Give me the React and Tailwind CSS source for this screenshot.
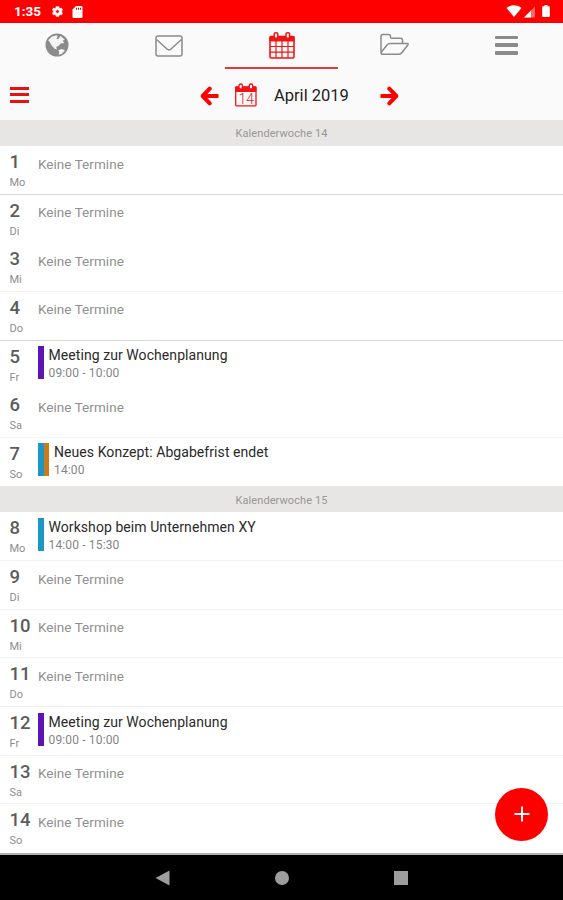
const PURPLE = "bg-[#5d14b4]";
const BLUE = "bg-[#1b96c5]";
const ORANGE = "bg-[#cb7a1c]";

const WEEKS = [
  {
    week: 14,
    days: [
      { day: 1, name: "Mo", line: "border-[#d9d9d9]" },
      { day: 2, name: "Di", line: "border-transparent" },
      { day: 3, name: "Mi", line: "border-[#f1f1f1]" },
      { day: 4, name: "Do", line: "border-[#d9d9d9]" },
      {
        day: 5,
        name: "Fr",
        line: "border-transparent",
        event: {
          title: "Meeting zur Wochenplanung",
          time: "09:00 - 10:00",
          colors: [PURPLE],
        },
      },
      { day: 6, name: "Sa", line: "border-[#f5f5f5]" },
      {
        day: 7,
        name: "So",
        line: "border-transparent",
        event: {
          title: "Neues Konzept: Abgabefrist endet",
          time: "14:00",
          colors: [BLUE, ORANGE],
        },
      },
    ],
  },
  {
    week: 15,
    days: [
      {
        day: 8,
        name: "Mo",
        line: "border-[#f1f1f1]",
        event: {
          title: "Workshop beim Unternehmen XY",
          time: "14:00 - 15:30",
          colors: [BLUE],
        },
      },
      { day: 9, name: "Di", line: "border-[#f1f1f1]" },
      { day: 10, name: "Mi", line: "border-[#f1f1f1]" },
      { day: 11, name: "Do", line: "border-[#f1f1f1]" },
      {
        day: 12,
        name: "Fr",
        line: "border-[#f1f1f1]",
        event: {
          title: "Meeting zur Wochenplanung",
          time: "09:00 - 10:00",
          colors: [PURPLE],
        },
      },
      { day: 13, name: "Sa", line: "border-[#f1f1f1]" },
      { day: 14, name: "So", line: "border-transparent" },
    ],
  },
];

function StatusBar() {
  return (
    <div className="h-[22.5px] shrink-0 bg-[#ff0000] flex items-center justify-between pl-[14px] pr-[13px] text-white">
      <div className="flex items-center">
        <span className="w-[37px] pt-[1px] text-[13.5px] leading-none font-bold">
          1:35
        </span>
        <svg width="13" height="13" viewBox="0 0 24 24" className="mt-[1px] mr-[8px]">
          <path
            fill="currentColor"
            d="M19.4 13a7.5 7.5 0 0 0 0-2l2.2-1.7-2.2-3.7-2.600 1a7.5 7.5 0 0 0-1.7-1L14.7 3h-5.400l-.4 2.6a7.5 7.5 0 0 0-1.7 1l-2.6-1-2.2 3.7L4.6 11a7.5 7.5 0 0 0 0 2l-2.2 1.7 2.2 3.7 2.6-1a7.5 7.5 0 0 0 1.7 1l.4 2.600h5.4l.4-2.6a7.5 7.5 0 0 0 1.7-1l2.6 1 2.2-3.7zM12 15.3a3.3 3.3 0 1 1 0-6.600 3.3 3.3 0 0 1 0 6.6z"
            stroke="currentColor"
            strokeWidth="1"
          />
        </svg>
        <svg width="11" height="12" viewBox="0 0 11 12" className="mt-[1px]">
          <path
            fill="currentColor"
            fillRule="evenodd"
            d="M4 0h5.5a1 1 0 0 1 1 1v10a1 1 0 0 1-1 1h-8a1 1 0 0 1-1-1V3.5zM4 1.8v2h1v-2zM6 1.8v2h1v-2zM8 1.8v2h1v-2z"
          />
        </svg>
      </div>
      <div className="flex items-center">
        <svg width="16" height="12" viewBox="0 0 16 12" className="mr-[2px]">
          <path fill="currentColor" d="M8 12 .5 3C4.5-.6 11.5-.6 15.5 3z" />
        </svg>
        <svg width="11" height="12" viewBox="0 0 11 12" className="mt-[1px] mr-[7px]">
          <path fill="currentColor" opacity="0.4" d="M0 11.5 11 .5v11z" />
          <path fill="currentColor" d="M0 11.5 7 4.5v7z" />
        </svg>
        <svg width="8" height="12" viewBox="0 0 8 12">
          <path
            fill="currentColor"
            d="M2.5 0h3v1.2H7a.8.8 0 0 1 .8.8v9.2a.8.8 0 0 1-.8.8H1a.8.8 0 0 1-.8-.8V2a.8.8 0 0 1 .8-.8h1.5z"
          />
        </svg>
      </div>
    </div>
  );
}

function GlobeIcon() {
  return (
    <svg width="24" height="24" viewBox="0 0 24 24">
      <circle cx="12" cy="12" r="11.5" fill="#8b8b8b" />
      <g fill="#f4f4f4">
        <path d="M3.2 7.2 6.500 3.8 11.500 2.3l1.300 1.700-1.600 1.500 2 .8 2.300-3.300 4.200 3.500-2 1.200 1.600 2.300-3.500.6-2.800 2.600-1.800.6.7 2.600-2.300-.7-3.300-3.800-1.800-3.200z" />
        <path d="m13.300 17.300 3.200-1.200 3.500 1.200-3 3.500-3.500.9.800-2.500z" />
      </g>
    </svg>
  );
}

function CalendarIcon() {
  return (
    <svg width="26" height="28" viewBox="0 0 26 28" fill="none" stroke="#f01414">
      <rect x="1" y="4.5" width="24" height="21.5" rx="1.2" strokeWidth="1.6" />
      <path d="M1 4.5h24V9H1z" fill="#f01414" />
      <path d="M7 9v17M13 9v17M19 9v17M1 14.5h24M1 20.2h24" strokeWidth="1.2" />
      <rect x="5.2" y=".8" width="3.600" height="5.500" rx="1.5" fill="#fafafa" strokeWidth="1.5" />
      <rect x="17" y=".8" width="3.600" height="5.500" rx="1.5" fill="#fafafa" strokeWidth="1.5" />
    </svg>
  );
}

function TodayIcon() {
  return (
    <svg width="22" height="24" viewBox="0 0 22 24" fill="none" stroke="#f01414">
      <rect x=".7" y="4" width="20.3" height="18.8" rx=".8" strokeWidth="1.3" />
      <path d="M.7 4h20.3v4.5H.7z" fill="#f01414" />
      <rect x="4" y="1" width="3.4" height="5" rx="1.5" fill="#fafafa" strokeWidth="1.3" />
      <rect x="14.3" y="1" width="3.4" height="5" rx="1.5" fill="#fafafa" strokeWidth="1.3" />
      <text
        x="11.3"
        y="20.6"
        textAnchor="middle"
        fontSize="14"
        fill="#f01414"
        stroke="none"
        fontWeight="300"
      >
        14
      </text>
    </svg>
  );
}

function Arrow({ className }) {
  return (
    <svg
      width="19"
      height="20"
      viewBox="0 0 19 20"
      fill="none"
      stroke="#ff0000"
      strokeWidth="4"
      className={className}
    >
      <path d="M.5 10H15" />
      <path d="M9.3 2.7 16.3 10l-7 7.3" strokeLinejoin="round" strokeLinecap="round" />
    </svg>
  );
}

function Tabs() {
  return (
    <div className="grid grid-cols-5 h-[47px] shrink-0 text-[#8b8b8b]">
      <div className="flex justify-center pt-[10.5px] pl-[1px]">
        <GlobeIcon />
      </div>
      <div className="flex justify-center pt-[12.5px]">
        <svg width="28" height="22" viewBox="0 0 28 22" fill="none" stroke="currentColor" strokeWidth="1.5">
          <rect x="1" y="1" width="26" height="20" rx="2" />
          <path d="M1.5 4.5 12 14q2 1.8 4 0L26.5 4.5" />
        </svg>
      </div>
      <div className="flex flex-col items-center justify-between pt-[9px]">
        <div className="pl-[1.5px]">
          <CalendarIcon />
        </div>
        <span className="w-full h-[1.5px] mb-[1px] bg-[#e23a3a]" />
      </div>
      <div className="flex justify-center pt-[10.5px]">
        <svg
          width="29"
          height="23"
          viewBox="0 0 29 23"
          fill="none"
          stroke="currentColor"
          strokeWidth="1.5"
          strokeLinejoin="round"
        >
          <path d="M1 19V3.5Q1 1.500 3 1.5h5.5q2 0 2 2v.8q0 1 1.5 1h8.5q2 0 2 2v3.2" />
          <path d="M1 19.5 7 12q1.2-1.5 3-1.5h17q1.8 0 .8 1.5L22 19.5q-1.2 1.8-3 1.8H3q-2 0-2-1.8z" />
        </svg>
      </div>
      <div className="flex flex-col items-center pt-[13px] gap-[4px]">
        <span className="w-[23px] h-[3.7px] rounded-[1px] bg-[#8b8b8b]" />
        <span className="w-[23px] h-[3.7px] rounded-[1px] bg-[#8b8b8b]" />
        <span className="w-[23px] h-[3.7px] rounded-[1px] bg-[#8b8b8b]" />
      </div>
    </div>
  );
}

function MonthBar() {
  return (
    <div className="h-[50.5px] shrink-0 flex items-center pl-[10px]">
      <div className="flex flex-col gap-[3.5px] mr-[171px]">
        <span className="w-[19px] h-[3px] bg-[#e81010]" />
        <span className="w-[19px] h-[3px] bg-[#e81010]" />
        <span className="w-[19px] h-[3px] bg-[#e81010]" />
      </div>
      <Arrow className="rotate-180 mt-[3px]" />
      <div className="ml-[16px]">
        <TodayIcon />
      </div>
      <span className="ml-[17px] w-[106px] mt-[3px] text-[16.5px] text-[#222222] whitespace-nowrap">
        April 2019
      </span>
      <Arrow className="mt-[3px]" />
    </div>
  );
}

function DayRow({ day, name, line, event }) {
  return (
    <div className={`h-[48.65px] flex border-b ${line}`}>
      <div className="w-[38px] shrink-0 pl-[9.5px] pt-[7px]">
        <p className="text-[18.5px] leading-[19px] font-medium text-[#5c5c5c]">{day}</p>
        <p className="mt-[4px] text-[11px] leading-[13px] text-[#8d8d8d]">{name}</p>
      </div>
      {event ? (
        <div className="flex pt-[5.5px]">
          <div className="flex h-[33px]">
            {event.colors.map((c) => (
              <span key={c} className={`w-[5.5px] ${c}`} />
            ))}
          </div>
          <div className="pl-[5px]">
            <p className="text-[14px] leading-[18px] tracking-[0.07px] text-[#2a2a2a]">
              {event.title}
            </p>
            <p className="mt-[1px] text-[12px] leading-[16px] tracking-[0.15px] text-[#858585]">
              {event.time}
            </p>
          </div>
        </div>
      ) : (
        <p className="pt-[8.5px] text-[13.5px] leading-[18px] tracking-[0.04px] text-[#8f8f8f]">
          Keine Termine
        </p>
      )}
    </div>
  );
}

export default function App() {
  return (
    <div className="relative w-[563px] h-[900px] overflow-hidden flex flex-col bg-[#fafafa] font-['Roboto',sans-serif]">
      <StatusBar />
      <Tabs />
      <MonthBar />

      {/* Agenda */}
      <div className="h-[735px] shrink-0 bg-white overflow-hidden border-b-2 border-[#b0b0b0]">
        {WEEKS.map((w) => (
          <div key={w.week}>
            <div className="h-[26px] flex items-center justify-center pt-[3px] bg-[#e8e5e5] text-[11px] tracking-[0.09px] text-[#999696]">
              Kalenderwoche {w.week}
            </div>
            {w.days.map((d) => (
              <DayRow key={d.day} {...d} />
            ))}
          </div>
        ))}
      </div>

      {/* Android navigation */}
      <div className="flex-1 bg-black flex items-center justify-center gap-[105px] pt-[1px]">
        <svg width="15" height="16" viewBox="0 0 15 16">
          <path d="M.5 8 14.5.5v15z" fill="#9d9d9d" />
        </svg>
        <span className="size-[14px] rounded-full bg-[#9d9d9d]" />
        <span className="size-[14px] bg-[#9d9d9d]" />
      </div>

      <button className="absolute left-[495px] top-[787.5px] size-[53px] rounded-full bg-[#ff0000] flex items-center justify-center">
        <svg width="16" height="16" viewBox="0 0 16 16" stroke="#ffffff" strokeWidth="2">
          <path d="M8 .5v15M.5 8h15" />
        </svg>
      </button>
    </div>
  );
}
